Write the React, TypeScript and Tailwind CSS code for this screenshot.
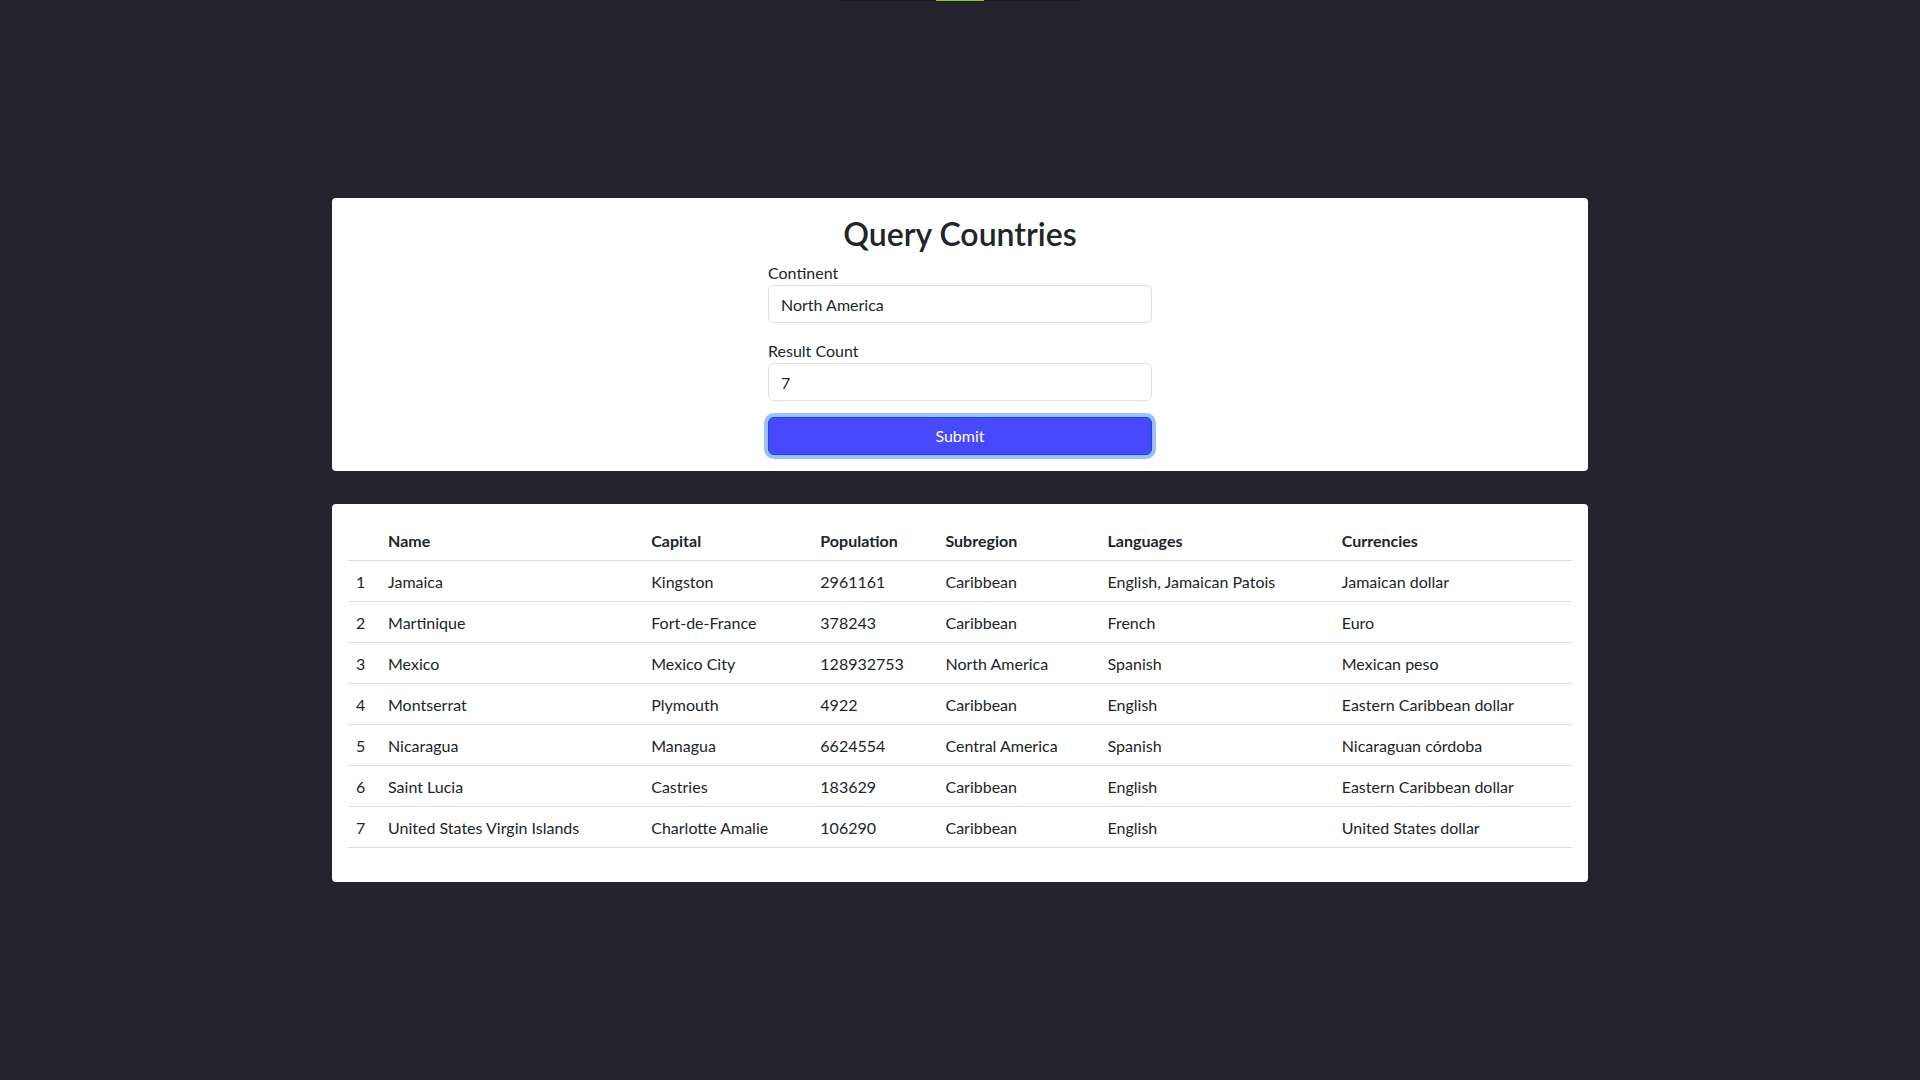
import React from "react";

const rows = [
  ["Jamaica", "Kingston", "2961161", "Caribbean", "English, Jamaican Patois", "Jamaican dollar"],
  ["Martinique", "Fort-de-France", "378243", "Caribbean", "French", "Euro"],
  ["Mexico", "Mexico City", "128932753", "North America", "Spanish", "Mexican peso"],
  ["Montserrat", "Plymouth", "4922", "Caribbean", "English", "Eastern Caribbean dollar"],
  ["Nicaragua", "Managua", "6624554", "Central America", "Spanish", "Nicaraguan córdoba"],
  ["Saint Lucia", "Castries", "183629", "Caribbean", "English", "Eastern Caribbean dollar"],
  ["United States Virgin Islands", "Charlotte Amalie", "106290", "Caribbean", "English", "United States dollar"],
];

const headers = ["", "Name", "Capital", "Population", "Subregion", "Languages", "Currencies"];
const widths = ["w-[32px]", "w-[263px]", "w-[169px]", "w-[125px]", "w-[162px]", "w-[234px]", "w-[238px]"];

export default function App() {
  return (
    <div className="min-h-screen bg-[#24232e] text-[#212529] font-['Lato','Liberation_Sans',sans-serif]">
      <div className="flex justify-center">
        <div className="flex w-[240px] h-px bg-[#1a1a1a]">
          <div className="w-[96px]" />
          <div className="w-[48px] bg-[#84c51a]" />
        </div>
      </div>

      <div className="w-[1256px] mx-auto mt-[197px]">
        <div className="bg-white rounded p-4">
          <form className="w-[384px] mx-auto" onSubmit={(e) => e.preventDefault()}>
            <h2 className="text-center text-[32px] leading-[38px] font-semibold pt-px mb-[8px]">Query Countries</h2>
            <div className="mb-4">
              <label className="block text-base leading-6">Continent</label>
              <input
                className="w-full h-[38px] px-3 border border-[#dee2e6] rounded-md text-base outline-none"
                defaultValue="North America"
              />
            </div>
            <div>
              <label className="block text-base leading-6">Result Count</label>
              <input
                className="w-full h-[38px] px-3 border border-[#dee2e6] rounded-md text-base outline-none"
                defaultValue="7"
              />
            </div>
            <button
              type="submit"
              className="w-full h-[38px] mt-4 rounded-md bg-[#4848ff] border border-[#1050d0] text-white text-base ring-4 ring-[#9ac0fc]"
            >
              Submit
            </button>
          </form>
        </div>

        <div className="bg-white rounded mt-[33px] px-4 pt-4 pb-[34px]">
          <table className="w-full table-fixed border-collapse text-base leading-6">
            <thead>
              <tr className="border-b border-[#dee2e6]">
                {headers.map((h, i) => (
                  <th key={i} className={`${widths[i]} text-left font-bold px-2 pt-[9px] pb-[7px]`}>
                    {h}
                  </th>
                ))}
              </tr>
            </thead>
            <tbody>
              {rows.map((r, i) => (
                <tr key={i} className="border-b border-[#dee2e6]">
                  <td className="px-2 pt-[9px] pb-[7px]">{i + 1}</td>
                  {r.map((c, j) => (
                    <td key={j} className="px-2 pt-[9px] pb-[7px] whitespace-nowrap">
                      {c}
                    </td>
                  ))}
                </tr>
              ))}
            </tbody>
          </table>
        </div>
      </div>
    </div>
  );
}
